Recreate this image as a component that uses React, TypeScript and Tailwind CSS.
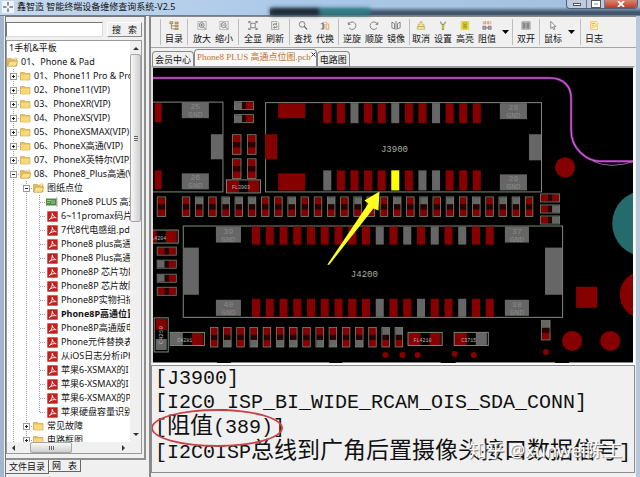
import { useState, type ReactNode } from "react";
import clsx from "clsx";

type NodeKind = "text" | "folder" | "open" | "board" | "pdf";

interface TreeNode {
  label: string;
  level: number;
  kind: NodeKind;
  expander?: "+" | "-";
  bold?: boolean;
  last?: boolean;
}

const tree: TreeNode[] = [
  { label: "1手机&平板", level: 0, kind: "text" },
  { label: "01、Phone & Pad", level: 0, kind: "open" },
  { label: "01、Phone11 Pro & Pro", level: 1, kind: "folder", expander: "+" },
  { label: "02、Phone11(VIP)", level: 1, kind: "folder", expander: "+" },
  { label: "03、PhoneXR(VIP)", level: 1, kind: "folder", expander: "+" },
  { label: "04、PhoneXS(VIP)", level: 1, kind: "folder", expander: "+" },
  { label: "05、PhoneXSMAX(VIP)", level: 1, kind: "folder", expander: "+" },
  { label: "06、PhoneX高通(VIP)", level: 1, kind: "folder", expander: "+" },
  { label: "07、PhoneX英特尔(VIP)", level: 1, kind: "folder", expander: "+" },
  { label: "08、Phone8_Plus高通(V", level: 1, kind: "open", expander: "-" },
  { label: "图纸点位", level: 2, kind: "open", expander: "-" },
  { label: "Phone8 PLUS 高通", level: 3, kind: "board" },
  { label: "6~11promax码片", level: 3, kind: "pdf" },
  { label: "7代8代电感组.pdf", level: 3, kind: "pdf" },
  { label: "Phone8 plus高通", level: 3, kind: "pdf" },
  { label: "Phone8 Plus高通图", level: 3, kind: "pdf" },
  { label: "Phone8P 芯片功能", level: 3, kind: "pdf" },
  { label: "Phone8P 芯片故障", level: 3, kind: "pdf" },
  { label: "Phone8P实物扫描", level: 3, kind: "pdf" },
  { label: "Phone8P高通位置", level: 3, kind: "pdf", bold: true },
  { label: "Phone8P高通版电", level: 3, kind: "pdf" },
  { label: "Phone元件替换表", level: 3, kind: "pdf" },
  { label: "从iOS日志分析iPh", level: 3, kind: "pdf" },
  { label: "苹果6-XSMAX的I", level: 3, kind: "pdf" },
  { label: "苹果6-XSMAX的I", level: 3, kind: "pdf" },
  { label: "苹果6-XSMAX的P", level: 3, kind: "pdf" },
  { label: "苹果硬盘容量识别", level: 3, kind: "pdf", last: true },
  { label: "常见故障", level: 2, kind: "folder", expander: "+" },
  { label: "电路框图", level: 2, kind: "folder", expander: "+" },
];

function Folder({ open }: { open?: boolean }) {
  return (
    <svg viewBox="0 0 11 10" className="h-2.5 w-[11px] shrink-0">
      <path d="M0.5 1.5h4l1 1h4.5v6.5h-9.5z" fill="#e9bd55" stroke="#b98c32" strokeWidth="0.5" />
      {open ? (
        <path d="M2.5 4.2h8.3l-2 5H0.6z" fill="#fbe08d" stroke="#b98c32" strokeWidth="0.5" />
      ) : (
        <path d="M1 3.5h8.6v5.2H1z" fill="#f8d877" />
      )}
      {open && <path d="M6 2l3-1.4 1.3.8-1 1.4" fill="#fff6cf" stroke="#b98c32" strokeWidth="0.4" />}
    </svg>
  );
}

function NodeIcon({ kind }: { kind: NodeKind }) {
  if (kind === "text") return null;
  if (kind === "folder" || kind === "open") return <Folder open={kind === "open"} />;
  if (kind === "board") {
    return (
      <svg viewBox="0 0 12 10" className="h-2.5 w-3 shrink-0">
        <path d="M0 1.5h10v7H0z" fill="#4e8a45" />
        <path d="M1 3.5h4M1 5.5h3M6 3v4M8 3v4" stroke="#b7dba4" strokeWidth="0.8" />
        <path d="M10.8 .5v9" stroke="#557" strokeWidth="0.8" />
      </svg>
    );
  }
  return (
    <svg viewBox="0 0 11 11" className="ml-px size-[11px] shrink-0">
      <rect x="0.3" y="0.3" width="10.4" height="10.4" fill="#c3201f" />
      <path
        d="M2 8.8C4 7.8 5.500 5 5.300 2.200c.3 2.400 1.800 4 3.900 4.500C6.500 6.300 4 7 2 8.800z"
        fill="none"
        stroke="#fff"
        strokeWidth="0.9"
      />
    </svg>
  );
}

function Guide({ expander, stub, end }: { expander?: "+" | "-"; stub?: boolean; end?: boolean }) {
  const drawing = (
    <svg viewBox="0 0 13 14" className="h-3.5 w-[13px]" shapeRendering="crispEdges">
      <path d={end ? "M6.5 0V7" : "M6.5 0V14"} stroke="#9a9a9a" strokeDasharray="1 1" />
      {(stub || expander) && <path d="M7 7.5H13" stroke="#9a9a9a" strokeDasharray="1 1" />}
      {expander && (
        <>
          <rect x="3.5" y="4.5" width="6" height="6" fill="#fff" stroke="#999" />
          <path d={expander === "+" ? "M5 7.500H8M6.500 6V9" : "M5 7.500H8"} stroke="#222" />
        </>
      )}
    </svg>
  );
  return expander ? (
    <button type="button" aria-label={expander === "+" ? "展开" : "折叠"} className="shrink-0">
      {drawing}
    </button>
  ) : (
    <span className="shrink-0">{drawing}</span>
  );
}

function TreeRow({ node }: { node: TreeNode }) {
  return (
    <li className="flex h-3.5 items-center whitespace-nowrap">
      {Array.from({ length: node.level }, (_, i) => {
        const own = i === node.level - 1;
        return <Guide key={i} expander={own ? node.expander : undefined} stub={own} end={own && node.last} />;
      })}
      <NodeIcon kind={node.kind} />
      <span className={clsx(node.kind === "text" ? "pl-0.5" : "pl-[3px]", node.bold && "font-bold")}>
        {node.label}
      </span>
    </li>
  );
}

const toolIcons: Record<string, ReactNode> = {
  目录: (
    <g stroke="#7d6a2c" fill="#f3dc86">
      <path d="M2.500 3v7.500h5M2.500 6.500h5" fill="none" />
      <path d="M.5 1h4v2.500h-4zM7.500 1.500h4v2h-4zM7.500 5.500h4v2h-4zM7.500 9.500h4v2h-4z" />
    </g>
  ),
  放大: (
    <g>
      <path d="M.5.5h11v11H.5z" stroke="#999" />
      <circle cx="5.500" cy="5.500" r="3.300" />
      <path d="M8 8l3 3M3.700 5.500h3.600M5.500 3.700v3.600" />
    </g>
  ),
  缩小: (
    <g>
      <path d="M.5.5h11v11H.5z" stroke="#999" />
      <circle cx="5.500" cy="5.500" r="3.300" />
      <path d="M8 8l3 3M3.700 5.500h3.600" />
    </g>
  ),
  全显: (
    <g>
      <path d="M3 3h6v6H3z" />
      <path d="M.5 3V.5H3M9 .5h2.500V3M11.500 9v2.500H9M3 11.500H.5V9M.5.5L3 3M11.500.5L9 3M11.500 11.500L9 9M.5 11.500L3 9" />
    </g>
  ),
  刷新: (
    <g>
      <path d="M1.500.5h7l2.500 2.500v8.500H1.500z" stroke="#888" />
      <path d="M4 6V4h4M7 2.500L8.500 4 7 5.500M8.500 6v2.500h-4M5.500 7L4 8.500 5.500 10" />
    </g>
  ),
  查找: (
    <g>
      <circle cx="4.800" cy="4.500" r="3.800" />
      <path d="M7.500 7.300l4 4" strokeWidth="1.500" />
    </g>
  ),
  代换: (
    <g>
      <path d="M.5 3.500h3v7h-3M3.500 1.500v10" />
      <path d="M5 3c1-2 3-2 4 0M5.500 4v6.500M7.500 4h3.500v7H7.500z" stroke="#e38745" />
    </g>
  ),
  逆旋: <path d="M1 1.500v3h3M1.500 4.500A5 5 0 1 1 2 9" />,
  顺旋: <path d="M11 1.500v3H8M10.500 4.500A5 5 0 1 0 10 9" />,
  镜像: <path d="M.5 1.500L4 3.500v7L.5 9zM11.500 1.500L8 3.500v7l3.500-1.500zM6 0v12" />,
  取消: (
    <g stroke="#b8a53b" fill="#f8edaa">
      <path d="M4.500 1h3v4h2.500v2.500H2V5h2.500zM1 7.500h10v3.500H1z" />
    </g>
  ),
  设置: (
    <g stroke="none">
      <path d="M2.500 0v3l2 2v6.500h3V5l2-2V0L8 1.500v2H4v-2z" fill="#7b8430" />
      <path d="M5 5h2v5.500H5z" fill="#d7d434" />
    </g>
  ),
  高亮: (
    <g>
      <path d="M1 .5h10v11H1z" fill="#f9ee42" stroke="#d9c51f" />
      <path d="M3.500 2.500h5v7h-5zM5 4.500h2v1H5zM5 7h2v1H5z" stroke="#7c7322" />
    </g>
  ),
  阻值: (
    <g>
      <path d="M1 .5v4M3 .5h1.500v3.500H3zM7 .5h1.500v3.500H7zM11 .5v4" stroke="#d77948" />
      <path d="M.5 7h4v4h-4zM7.500 7h4v4h-4zM4.500 9h3" fill="#aaa" stroke="#666" />
    </g>
  ),
  双开: (
    <g stroke="#888">
      <path d="M.5 1h11v10H.5z" fill="#ccc" />
      <path d="M2 2.500h3v7H2zM7 2.500h3v7H7z" fill="#888" />
    </g>
  ),
  鼠标: <path d="M3 .5v9.500l2.200-2 1.600 3.500 1.500-.7-1.500-3.300h3z" fill="#fff" />,
  日志: (
    <g stroke="#e3b42f">
      <path d="M10.500 6v5.500h-9V1h9" fill="#fff5bf" />
      <path d="M3 3.500h5M3 6h3M3 8.500h2M6 9l5.500-6" strokeWidth="1.300" />
    </g>
  ),
};

const toolGroups = [
  { items: ["目录"], pad: "px-0.5" },
  { items: ["放大", "缩小"], pad: "px-[3px]" },
  { items: ["全显", "刷新"], pad: "px-[3px]" },
  { items: ["查找", "代换"], pad: "px-0.5" },
  { items: ["逆旋", "顺旋", "镜像"], pad: "px-0.5" },
  { items: ["取消", "设置", "高亮", "阻值"], pad: "px-0", menu: true },
  { items: ["双开"], pad: "px-0.5" },
  { items: ["鼠标"], pad: "px-0.5", menu: true },
  { items: ["日志"], pad: "px-0.5" },
];

function Toolbar() {
  return (
    <div className="flex h-[31px] shrink-0 items-stretch border-b border-[#a5a5a5] py-0.5 pl-[9px]">
      {toolGroups.map((group) => (
        <div key={group.items[0]} className={clsx("flex border-l border-[#bdbdbd]", group.pad)}>
          {group.items.map((name) => (
            <button key={name} type="button" className="flex w-[22px] flex-col items-center pt-0.5">
              <svg viewBox="0 0 12 12" className="size-3" fill="none" stroke="#555" strokeWidth="0.9">
                {toolIcons[name]}
              </svg>
              <span className="pt-[3px] leading-3 whitespace-nowrap">{name}</span>
            </button>
          ))}
          {group.menu && (
            <button type="button" aria-label="更多" className="flex w-3.5 items-center justify-center">
              <svg viewBox="0 0 7 4" className="h-1 w-[7px]">
                <path d="M0 0h7L3.500 4z" fill="#000" />
              </svg>
            </button>
          )}
        </div>
      ))}
    </div>
  );
}

const RED = "#860000";
const GREY = "#666666";
const TEAL = "#256b6b";
const LINE = "#7d8b7a";

function shade(code: string) {
  return code === "y" ? "#ffff00" : code === "g" ? GREY : RED;
}

function Pins({ x, y, step, height, codes }: { x: number; y: number; step: number; height: number; codes: string }) {
  return (
    <>
      {codes.split("").map((code, i) => (
        <rect key={i} x={x + i * step} y={y} width={8} height={height} fill={shade(code)} />
      ))}
    </>
  );
}

// two-pad part standing upright, codes = top pad then bottom pad
function PartV({ x, y, codes, w = 9, h = 20 }: { x: number; y: number; codes: string; w?: number; h?: number }) {
  return (
    <g>
      <rect x={x + 1} y={y + 1} width={w - 1} height={7} fill={shade(codes[0])} />
      <rect x={x + 1} y={y + 8} width={w - 1} height={h - 15} fill="#260000" />
      <rect x={x + 1} y={y + h - 7} width={w - 1} height={7} fill={shade(codes[1])} />
      <rect x={x + 0.5} y={y + 0.5} width={w - 0.5} height={h - 0.5} fill="none" stroke={LINE} strokeWidth="0.8" />
    </g>
  );
}

function PartH({ x, y, codes }: { x: number; y: number; codes: string }) {
  return (
    <g>
      <rect x={x + 1} y={y + 1} width={7} height={7} fill={shade(codes[0])} />
      <rect x={x + 8} y={y + 1} width={4} height={7} fill="#200000" />
      <rect x={x + 12} y={y + 1} width={7} height={7} fill={shade(codes[1])} />
      <rect x={x + 0.5} y={y + 0.5} width={19} height={8} fill="none" stroke={LINE} strokeWidth="0.8" />
    </g>
  );
}

function NamedPart({ x, y, codes, name }: { x: number; y: number; codes: string; name: string }) {
  return (
    <g>
      <rect x={x + 1} y={y + 1} width={12} height={12} fill={shade(codes[0])} />
      <rect x={x + 22} y={y + 1} width={11} height={12} fill={shade(codes[1])} />
      <rect x={x + 0.5} y={y + 0.5} width={34} height={13} fill="none" stroke={LINE} />
      <text x={x + 15} y={y + 10} fontSize="5" textAnchor="middle" fill="#bbb">
        {name}
      </text>
    </g>
  );
}

function GroundPad({ x, y, w = 27, pin }: { x: number; y: number; w?: number; pin: string }) {
  return (
    <g>
      <rect x={x} y={y} width={w} height={16} fill={GREY} />
      <g fontSize="8" textAnchor="middle" fill="#8a8a8a">
        <text x={x + w / 2} y={y + 7}>
          {pin}
        </text>
        <text x={x + w / 2} y={y + 15}>
          GND
        </text>
      </g>
    </g>
  );
}

const middleRow = "rgrgggrrgrrgrgrrgrgrgrgrggr";
const lowerRow = ["rr", "rg", "rr", "rg", "rr", "rg", "rg", "rr", "rg", "rg", "rr", "rg", "rr", "gr", "gr"];
const testPoints = [
  [386, 354],
  [403, 354],
  [418, 354],
  [455, 353],
  [474, 354],
  [546, 351],
];

function BoardView() {
  return (
    <svg
      viewBox="153 68 481 294"
      preserveAspectRatio="xMidYMid slice"
      className="min-h-0 w-full flex-1 bg-black font-['Liberation_Mono',monospace]"
      role="img"
      aria-label="点位图"
    >
      <g fill="none">
        <path
          d="M150 78H550C564 78 571 87 571 98V130C571 149 587 161 600 161H640"
          stroke="#8a1f96"
          strokeWidth="2.500"
        />
        <path d="M150 78H550C564 78 571 87 571 98V130C571 149 587 161 600 161H640" stroke="#c971cf" />
        <path d="M593 161Q610 169 634 161" stroke="#b57ab8" strokeWidth="0.800" />
      </g>

      <g fill="none" stroke={LINE}>
        <rect x="100" y="102" width="124" height="89.500" />
        <rect x="266.500" y="102.500" width="275" height="89" />
        <rect x="184.500" y="225.500" width="378" height="91" />
      </g>

      <rect x="156" y="103" width="7" height="19" fill={RED} />
      <rect x="156" y="170" width="7" height="19" fill={RED} />
      <rect x="212" y="134" width="12" height="25" fill={GREY} />
      <GroundPad x={183} y={102} pin="25" />
      <GroundPad x={183} y={173} pin="26" />

      <PartH x={235} y={101} codes="gr" />
      <PartH x={235} y={114} codes="gr" />
      <PartV x={233} y={134} codes="rr" />
      <PartV x={248} y={134} codes="rr" />
      <PartV x={233} y={158} codes="rr" />
      <PartV x={248} y={158} codes="rr" />
      <NamedPart x={227} y={179} codes="rr" name="FL3903" />

      <rect x="279" y="103" width="27" height="15" fill={RED} />
      <rect x="279" y="173" width="27" height="17" fill={RED} />
      <rect x="266" y="134" width="12" height="25" fill={RED} />
      <Pins x={324} y={103} step={13.55} height={20} codes="rrgrrgrrgrrr" />
      <Pins x={324} y={170} step={13.55} height={20} codes="grrrryrggrrr" />
      <GroundPad x={500} y={103} pin="28" />
      <GroundPad x={500} y={174} pin="26" />
      <rect x="529" y="134" width="12" height="26" fill={GREY} />

      <PartV x={158} y={196} codes="rr" />
      {middleRow.split("").map((code, i) => (
        <PartV key={i} x={183 + i * 13.15} y={196} codes={code + "r"} w={8} />
      ))}
      <PartH x={540} y={193} codes="rr" />
      <PartH x={540} y={204} codes="rg" />
      <PartH x={540} y={215} codes="rg" />

      <rect x="185" y="247" width="15" height="47" fill={GREY} />
      <rect x="545" y="247" width="17" height="47" fill={GREY} />
      <GroundPad x={217} y={226} w={25} pin="39" />
      <GroundPad x={217} y={299} w={25} pin="40" />
      <GroundPad x={505} y={226} w={24} pin="37" />
      <GroundPad x={505} y={299} w={24} pin="38" />
      <Pins x={253} y={226} step={13.7} height={18} codes="rrrrrrrrrgrgrgrgrr" />
      <Pins x={253} y={298} step={13.7} height={18} codes="rrrrrrrrrgrrgrrgrr" />

      <NamedPart x={145} y={229} codes="rr" name="L4204" />
      <PartH x={158} y={246} codes="rr" />
      <PartH x={158} y={259} codes="gr" />
      <PartH x={158} y={273} codes="gr" />
      <PartH x={158} y={286} codes="rr" />
      <rect x="157" y="318" width="11" height="11" fill={RED} />
      <rect x="157" y="338" width="11" height="11" fill={GREY} />
      <rect x="155.500" y="317" width="14" height="34" fill="none" stroke={LINE} />
      <text transform="translate(164 343) rotate(-90)" fontSize="6" fill="#bbb">
        C4250
      </text>
      <NamedPart x={171} y={331} codes="gr" name="C4281" />
      {lowerRow.map((codes, i) => (
        <PartV key={i} x={211 + i * 13.15} y={326} codes={codes} w={8} />
      ))}
      <NamedPart x={408} y={331} codes="rr" name="FL4210" />
      <NamedPart x={454} y={331} codes="rg" name="C3715" />
      <PartV x={541} y={319} codes="gr" />

      <g fill={RED}>
        <circle cx="565" cy="167" r="10" />
        <circle cx="572" cy="340" r="10" />
        <circle cx="610" cy="340" r="10" />
        <circle cx="643" cy="294" r="23.500" />
        <rect x="576" y="286" width="21" height="21" />
        {testPoints.map(([cx, cy]) => (
          <circle key={cx} cx={cx} cy={cy} r="3" />
        ))}
      </g>
      <circle cx="645" cy="223" r="33" fill={TEAL} />

      <g fontSize="9" fill="#a4b3a2" textAnchor="middle">
        <text x="395" y="152">
          J3900
        </text>
        <text x="365" y="276">
          J4200
        </text>
      </g>

      <path d="M150 361.500H218M232 361.500H330M343 361.500H441M456 361.500H555M569 361.500H640" stroke="#888" />
      <path d="M380 191L365 200L369 203L328 264L330 264L374 208L379 210Z" fill="#ffff20" />
    </svg>
  );
}

function Zh({ children }: { children: ReactNode }) {
  return <span className="text-[23px] leading-6">{children}</span>;
}

function NetInfo() {
  return (
    <div className="relative mb-1 h-[108px] shrink-0 overflow-hidden border border-[#8c8c8c] bg-[#f0f0f0] pt-px pl-[3px] font-['Liberation_Mono','Noto_Sans_CJK_SC',monospace] text-xl leading-6 whitespace-nowrap text-[#111]">
      <p className="h-6">[J3900]</p>
      <p className="h-6">[I2C0_ISP_BI_WIDE_RCAM_OIS_SDA_CONN]</p>
      <p className="h-[25px]">
        [<Zh>阻值</Zh>(389)]
      </p>
      <p className="h-6">
        [I2C0ISP<Zh>总线到广角后置摄像头接口数据信号</Zh>]
      </p>
      <div className="absolute top-[43px] -left-px h-[38px] w-[132px] rounded-[50%] border-2 border-[#c9444a]" />
      <div className="absolute right-3 bottom-2.5 font-['Noto_Sans','Noto_Sans_CJK_SC',sans-serif] text-lg leading-6 text-white [text-shadow:1px_1px_1px_#777]">
        知乎 @xunwei陈工
      </div>
    </div>
  );
}

function TitleBar() {
  return (
    <header className="flex h-4 shrink-0 items-start border-b border-[#6d7f92] bg-linear-to-r from-[#c5d9ee] via-[#a9c7e8] to-[#a3bfe0] pl-0.5">
      <svg viewBox="0 0 12 12" className="mt-px size-3" stroke="#333" fill="#fff">
        <path d="M0 0h12v12H0z" stroke="none" fillOpacity="0.7" />
        <path d="M6 1v3.500M6 7.500V11M1 6h3.500M7.500 6H11" />
      </svg>
      <h1 className="pl-[3px] text-[9px] leading-[13px] whitespace-nowrap">鑫智造 智能终端设备维修查询系统-V2.5</h1>
      <div className="ml-auto flex h-[15px] w-[370px] max-w-[60%] items-start bg-linear-to-b from-transparent from-45% to-[#41566b] to-80% pr-0.5">
        <span className="mt-2 h-[7px] w-[50px] bg-[#1b2733] blur-[2px]" />
        <span className="mt-2 h-[7px] w-[50px] bg-[#2d7f86] blur-[2px]" />
        <div className="ml-auto flex h-[9px] overflow-hidden rounded-b border border-t-0 border-[#4f6175] bg-[#bccbdd]">
          <button type="button" aria-label="最小化" className="flex w-5 items-center justify-center border-r border-[#6b7d92]">
            <span className="h-[3px] w-2 border border-[#555] bg-white" />
          </button>
          <button type="button" aria-label="最大化" className="flex w-[18px] items-center justify-center border-r border-[#6b7d92]">
            <span className="h-1.5 w-2 border-2 border-white outline outline-[#555]" />
          </button>
          <button
            type="button"
            aria-label="关闭"
            className="flex w-8 items-center justify-center bg-linear-to-b from-[#d98574] to-[#bd3620]"
          >
            <svg viewBox="0 0 8 6" className="h-1.5 w-2" stroke="#fff" strokeWidth="1.800">
              <path d="M1 0l6 6M7 0L1 6" />
            </svg>
          </button>
        </div>
      </div>
    </header>
  );
}

function Arrow({ d }: { d: string }) {
  return (
    <svg viewBox="0 0 6 6" className="size-1.5">
      <path d={d} fill="#333" />
    </svg>
  );
}

function Sidebar() {
  const [query, setQuery] = useState("");

  return (
    <aside className="flex w-[141px] shrink-0 flex-col border-t border-l border-[#777]">
      <div className="flex min-h-0 flex-1 flex-col border-r-2 border-b-2 border-[#8f8f8f] pr-0.5 pb-1">
        <form className="flex gap-1 pt-[5px]">
          <input
            type="text"
            aria-label="搜索"
            value={query}
            onChange={(e) => setQuery(e.target.value)}
            className="h-[15px] min-w-0 flex-1 border border-t-[#777] border-r-[#ddd] border-b-[#ddd] border-l-[#777] bg-white px-0.5"
          />
          <button
            type="button"
            className="h-[15px] w-[35px] border border-t-white border-r-[#888] border-b-[#888] border-l-white leading-3 whitespace-pre"
          >
            搜   索
          </button>
        </form>

        <div className="mt-[3px] grid min-h-0 flex-1 grid-cols-[minmax(0,1fr)_11px] grid-rows-[minmax(0,1fr)_11px] border border-[#999] bg-white">
          <ul className="overflow-hidden">
            {tree.map((node, i) => (
              <TreeRow key={i} node={node} />
            ))}
          </ul>
          <div className="flex flex-col items-center bg-[#f0f0f0]">
            <span className="flex h-[13px] items-center">
              <Arrow d="M0 5l3-3 3 3z" />
            </span>
            <div className="flex h-[42%] w-full flex-col items-center justify-center gap-px rounded-xs border border-[#a5a5a5] bg-linear-to-r from-[#f8f8f8] to-[#cfcfcf]">
              <span className="h-px w-1 bg-[#666]" />
              <span className="h-px w-1 bg-[#666]" />
              <span className="h-px w-1 bg-[#666]" />
            </div>
            <span className="mt-auto pb-1">
              <Arrow d="M0 1l3 3 3-3z" />
            </span>
          </div>
          <div className="flex items-center bg-[#f0f0f0] px-[3px]">
            <Arrow d="M5 0L2 3l3 3z" />
            <div className="ml-3.5 flex h-full w-[42px] items-center justify-center gap-px rounded-xs border border-[#a5a5a5] bg-linear-to-b from-[#f8f8f8] to-[#cfcfcf]">
              <span className="h-1 w-px bg-[#666]" />
              <span className="h-1 w-px bg-[#666]" />
              <span className="h-1 w-px bg-[#666]" />
            </div>
            <span className="ml-auto">
              <Arrow d="M1 0l3 3-3 3z" />
            </span>
          </div>
          <div className="bg-[#f0f0f0]" />
        </div>
      </div>
      <div className="flex h-[17px] shrink-0 items-start">
        <button type="button" className="h-3.5 border-r border-b border-[#666] px-[3px] leading-3 whitespace-nowrap">
          文件目录
        </button>
        <button type="button" className="h-3 border-r border-b border-[#666] px-[3px] leading-[11px] whitespace-pre">
          网   表
        </button>
      </div>
    </aside>
  );
}

function DocumentTabs() {
  return (
    <div className="flex h-[18px] shrink-0 items-end pl-px whitespace-nowrap">
      <button type="button" className="h-[15px] rounded-t-sm border border-b-0 border-[#888] px-0.5 leading-[13px]">
        会员中心
      </button>
      <button
        type="button"
        className="flex h-[17px] items-center rounded-t-sm border border-b-0 border-[#888] bg-[#f8f8f8] pl-0.5 font-['Liberation_Serif','Noto_Sans_CJK_SC',serif] text-[#c46f28]"
      >
        Phone8 PLUS 高通点位图.pcb
        <svg viewBox="0 0 5 5" className="mb-2 size-[5px]" stroke="#333">
          <path d="M.5.5l4 4M4.500.5l-4 4" />
        </svg>
      </button>
      <button type="button" className="h-[15px] rounded-t-sm border border-b-0 border-[#888] px-0.5 leading-[13px]">
        电路图
      </button>
    </div>
  );
}

export default function App() {
  return (
    <div className="flex h-screen flex-col overflow-hidden bg-[#f0f0f0] font-['Noto_Sans','Noto_Sans_CJK_SC',sans-serif] text-[9px] text-[#111]">
      <TitleBar />
      <div className="flex min-h-0 flex-1 border-r-4 border-l-4 border-r-[#b9c8d8] border-l-[#a3b7cc] pl-px">
        <Sidebar />
        <main className="ml-[3px] flex min-w-0 flex-1 flex-col border-t border-l-2 border-[#888]">
          <Toolbar />
          <DocumentTabs />
          <div className="flex min-h-0 flex-1 flex-col pr-px">
            <div className="flex min-h-0 flex-1 flex-col border-2 border-t-[#999] border-r-white border-b-white border-l-[#ddd]">
              <BoardView />
            </div>
            <NetInfo />
          </div>
        </main>
      </div>
    </div>
  );
}
